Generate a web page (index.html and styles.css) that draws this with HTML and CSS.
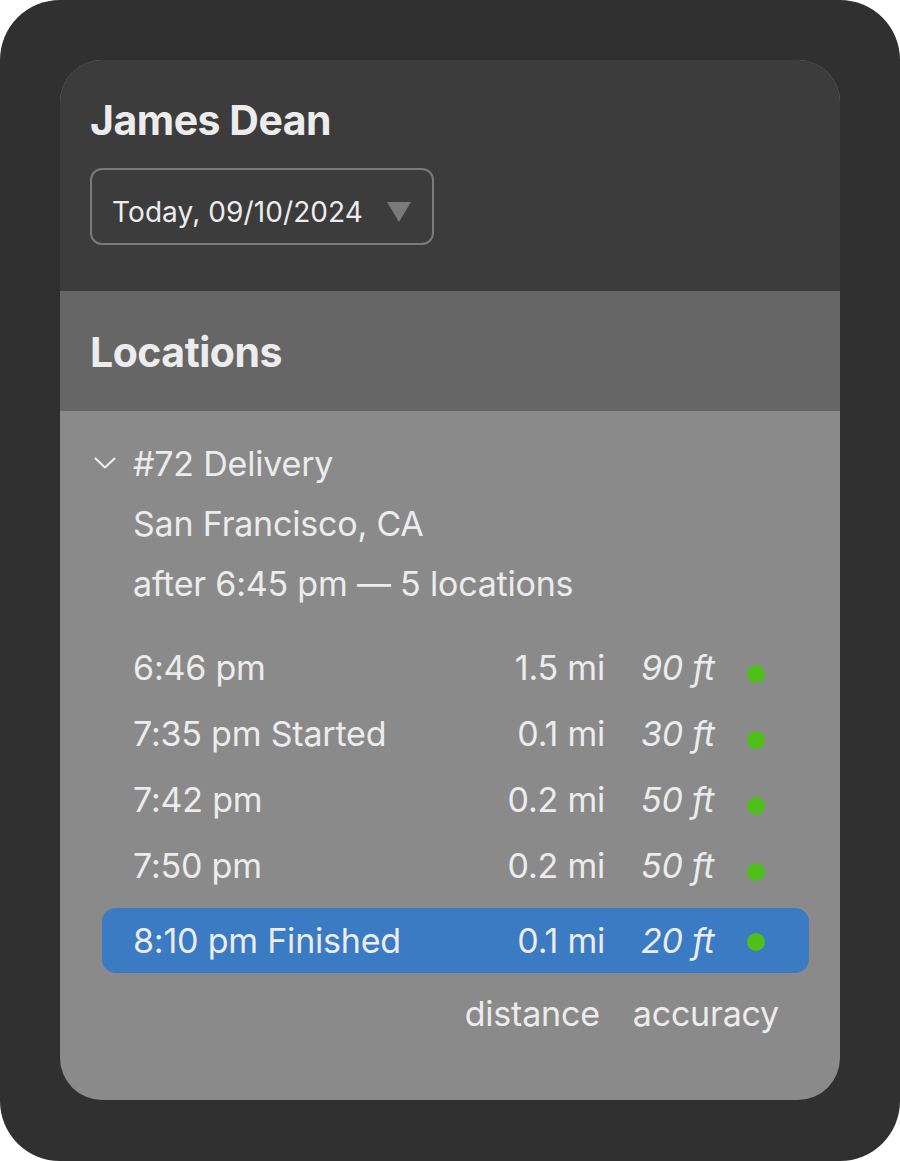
FILE: index.html
```html
<!DOCTYPE html>
<html lang="en">
<head>
<meta charset="utf-8">
<title>James Dean – Locations</title>
<link rel="stylesheet" href="styles.css">
</head>
<body>
<div class="frame">
  <div class="card">
    <header class="header">
      <h1 class="title">James Dean</h1>
      <div class="select">
        <span class="select-text">Today, 09/10/2024</span>
        <svg class="select-caret" width="24" height="20" viewBox="0 0 24 20"><path d="M0 0 H24 L12 20 Z" fill="#7a7a7a"/></svg>
      </div>
    </header>
    <div class="band">
      <h2 class="title">Locations</h2>
    </div>
    <section class="body">
      <div class="group">
        <div class="line first">
          <svg class="chev" width="22" height="12" viewBox="0 0 22 12"><path d="M1.5 1.5 L11 10.5 L20.5 1.5" fill="none" stroke="#eeeeee" stroke-width="2" stroke-linecap="round" stroke-linejoin="round"/></svg>
          <span>#72 Delivery</span>
        </div>
        <div class="line">San Francisco, CA</div>
        <div class="line">after 6:45 pm — 5 locations</div>
      </div>
      <div class="rows">
        <div class="row"><span class="time">6:46 pm</span><span class="dist">1.5 mi</span><span class="acc">90 ft</span><span class="dot"></span></div>
        <div class="row"><span class="time">7:35 pm Started</span><span class="dist">0.1 mi</span><span class="acc">30 ft</span><span class="dot"></span></div>
        <div class="row"><span class="time">7:42 pm</span><span class="dist">0.2 mi</span><span class="acc">50 ft</span><span class="dot"></span></div>
        <div class="row"><span class="time">7:50 pm</span><span class="dist">0.2 mi</span><span class="acc">50 ft</span><span class="dot"></span></div>
        <div class="row selected"><span class="time">8:10 pm Finished</span><span class="dist">0.1 mi</span><span class="acc">20 ft</span><span class="dot"></span></div>
      </div>
      <div class="legend">
        <span>distance</span>
        <span>accuracy</span>
      </div>
    </section>
  </div>
</div>
</body>
</html>
```

FILE: styles.css
```css
* { box-sizing: border-box; }
html, body { margin: 0; padding: 0; background: #ffffff; }
body {
  font-family: Inter, "Noto Sans", "Liberation Sans", sans-serif;
  color: #ececec;
}
.frame {
  width: 900px;
  height: 1161px;
  background: #303030;
  border-radius: 60px;
  padding: 60px;
}
.card {
  height: 1040px;
  border-radius: 42px;
  overflow: hidden;
  background: #8a8a8a;
  display: flex;
  flex-direction: column;
}
.header {
  background: #3c3c3c;
  padding: 36px 30px 46px 30px;
}
.title {
  margin: 0;
  font-size: 41px;
  line-height: 48px;
  font-weight: 700;
  letter-spacing: -0.5px;
  color: #ececec;
}
.select {
  margin-top: 24px;
  width: 344px;
  height: 77px;
  border: 2px solid #7a7a7a;
  border-radius: 12px;
  padding: 25px 21px 14px 20px;
  display: flex;
  align-items: flex-start;
  justify-content: space-between;
}
.select-text {
  font-size: 28px;
  line-height: 34px;
  letter-spacing: 0.1px;
  color: #ececec;
}
.select-caret { margin-top: 7px; }
.band {
  background: #666666;
  height: 120px;
  padding: 37px 30px 0 30px;
}
.body {
  flex: 1;
  padding: 23px 31px 0 42px;
}
.group { padding-left: 31px; }
.line {
  font-size: 34px;
  line-height: 60px;
  letter-spacing: -0.2px;
}
.line.first {
  display: flex;
  align-items: center;
  gap: 17px;
  margin-left: -39px;
}
.chev { flex: none; margin-top: -2px; }
.rows { margin-top: 21px; }
.row {
  display: grid;
  grid-template-columns: 1fr auto 142px 18px;
  align-items: center;
  height: 66px;
  padding: 0 44px 0 31px;
  font-size: 34px;
  line-height: 66px;
  letter-spacing: -0.2px;
  border-radius: 14px;
}
.row.selected {
  background: #3a7bc3;
  height: 65px;
  line-height: 65px;
  margin-top: 9px;
}
.dist { text-align: right; }
.acc { font-style: italic; padding-left: 36px; }
.dot {
  width: 18px;
  height: 18px;
  border-radius: 50%;
  background: #4fbf1a;
  margin-top: 12px;
}
.row.selected .dot { margin-top: 2px; }
.legend {
  margin-top: 21px;
  display: flex;
  justify-content: flex-end;
  gap: 33px;
  padding-right: 30px;
  font-size: 34px;
  line-height: 40px;
  letter-spacing: -0.2px;
}
```
